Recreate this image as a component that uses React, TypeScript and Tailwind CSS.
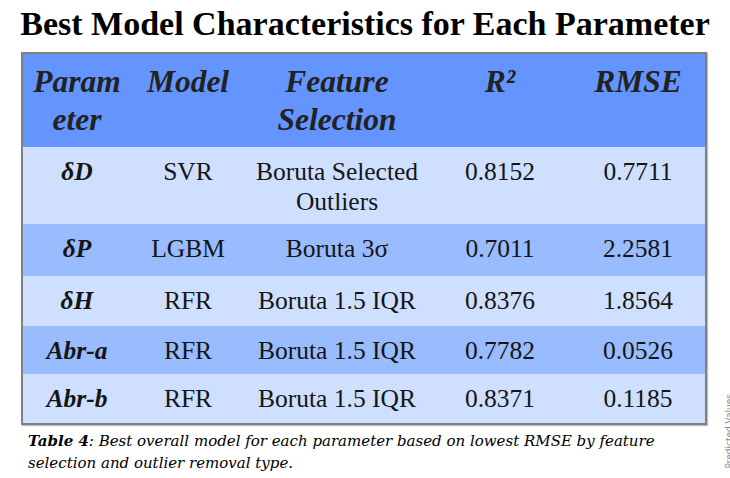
import React from "react"

type Row = {
    param: string
    model: string
    feature: React.ReactNode
    r2: string
    rmse: string
    bg: string
    h: string
}

const rows: Row[] = [
    { param: "δD", model: "SVR", feature: <>Boruta Selected<br />Outliers</>, r2: "0.8152", rmse: "0.7711", bg: "bg-[#cfdfff]", h: "h-[77px]" },
    { param: "δP", model: "LGBM", feature: "Boruta 3σ", r2: "0.7011", rmse: "2.2581", bg: "bg-[#99bbff]", h: "h-[52px]" },
    { param: "δH", model: "RFR", feature: "Boruta 1.5 IQR", r2: "0.8376", rmse: "1.8564", bg: "bg-[#cfdfff]", h: "h-[50px]" },
    { param: "Abr-a", model: "RFR", feature: "Boruta 1.5 IQR", r2: "0.7782", rmse: "0.0526", bg: "bg-[#99bbff]", h: "h-[48px]" },
    { param: "Abr-b", model: "RFR", feature: "Boruta 1.5 IQR", r2: "0.8371", rmse: "0.1185", bg: "bg-[#cfdfff]", h: "h-[49px]" },
]

const headers = ["Parameter", "Model", "Feature Selection", "R²", "RMSE"]

const cell = "align-top pt-[10px] px-[8px] [font-family:'Liberation_Serif',serif]"

export default function App() {
    return (
        <div className="relative w-[730px] h-[478px] overflow-hidden bg-white [font-family:'Liberation_Serif',serif]">
            <h1 className="pt-[4px] text-center text-[34px] leading-[40px] [font-family:'Liberation_Serif',serif] font-bold text-black">
                Best Model Characteristics for Each Parameter
            </h1>

            <div className="mt-[8px] ml-[21px] w-[686px] border-2 border-[#808080] shadow-[1px_1px_1px_rgba(0,0,0,0.25)]">
                <table className="w-full table-fixed border-separate border-spacing-0 text-center">
                    <colgroup>
                        <col className="w-[108px]" />
                        <col className="w-[114px]" />
                        <col className="w-[184px]" />
                        <col className="w-[142px]" />
                        <col className="w-[134px]" />
                    </colgroup>
                    <thead>
                        <tr className="h-[93px] bg-[#6495ff]">
                            {headers.map(h => (
                                <th
                                    key={h}
                                    className="align-top px-[8px] pt-[9px] [font-family:'Liberation_Serif',serif] text-[31.5px] leading-[38px] font-bold italic text-[#222] break-all"
                                >
                                    {h === "Feature Selection" ? <span className="break-normal">{h}</span> : h}
                                </th>
                            ))}
                        </tr>
                    </thead>
                    <tbody className="text-[25.5px] leading-[30px] text-[#151515]">
                        {rows.map(r => (
                            <tr key={r.param} className={`${r.bg} ${r.h}`}>
                                <td className={`${cell} font-bold italic`}>{r.param}</td>
                                <td className={cell}>{r.model}</td>
                                <td className={cell}>{r.feature}</td>
                                <td className={cell}>{r.r2}</td>
                                <td className={cell}>{r.rmse}</td>
                            </tr>
                        ))}
                    </tbody>
                </table>
            </div>

            <p className="mt-[5px] ml-[28px] w-[680px] [font-family:'DejaVu_Serif',serif] italic text-[15px] leading-[22px] text-black">
                <b>Table 4</b>: Best overall model for each parameter based on lowest RMSE by feature selection and outlier removal type.
            </p>

            <span className="absolute left-[724px] top-[394px] [font-family:'DejaVu_Sans',sans-serif] text-[9px] leading-[10px] text-[#8a8a8a] whitespace-nowrap [writing-mode:vertical-rl] rotate-180">
                Predicted Values
            </span>
        </div>
    )
}
